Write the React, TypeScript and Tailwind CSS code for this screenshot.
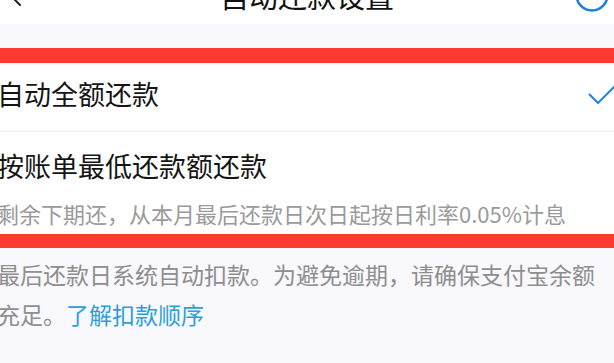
import React from "react";

const font = { fontFamily: '"Noto Sans CJK SC", "Noto Sans", sans-serif' };

function Header() {
    return (
        <div className="relative h-[24px] overflow-hidden bg-white">
            <div className="-mt-[27px] grid h-[44px] grid-cols-[1fr_auto_1fr] items-center">
                <svg width="24" height="24" viewBox="0 0 24 24" className="ml-[4px] text-[#222]">
                    <path d="M16 2 L6 12 L16 22" fill="none" stroke="currentColor" strokeWidth="2" strokeLinecap="round" strokeLinejoin="round" />
                </svg>
                <div className="text-[29px] leading-[44px] text-[#111]">自动还款设置</div>
                <svg width="36" height="36" viewBox="0 0 36 36" className="mr-[4px] justify-self-end">
                    <circle cx="18" cy="18" r="15.5" fill="none" stroke="#1a7fe0" strokeWidth="2.5" />
                </svg>
            </div>
        </div>
    );
}

export default function App() {
    return (
        <div className="h-[363px] w-[614px] overflow-hidden bg-[#f9f8fc]" style={font}>
            <Header />
            <div className="h-[24px]" />
            <div className="h-[15px] bg-[#fe3a30]" />

            <div className="flex h-[68px] items-center justify-between bg-white pb-[8px]">
                <span className="-ml-[3px] text-[27px] leading-[27px] text-[#151515]">自动全额还款</span>
                <svg width="28" height="22" viewBox="0 0 28 22" className="-mr-[2px] mt-[6px]">
                    <path d="M1 9 L10 18 L27 1" fill="none" stroke="#2a86dc" strokeWidth="2.2" />
                </svg>
            </div>
            <div className="h-px bg-[#eeeeee]" />

            <div className="flex h-[102px] flex-col bg-white pt-[20px]">
                <span className="-ml-[3px] text-[27px] leading-[27px] text-[#151515]">按账单最低还款额还款</span>
                <span className="-ml-[3px] mt-[23px] text-[22px] leading-[22px] text-[#9a9a9a]">
                    剩余下期还，从本月最后还款日次日起按日利率0.05%计息
                </span>
            </div>
            <div className="h-[14px] bg-[#fe3a30]" />

            <div className="-ml-[3px] pt-[6px] text-[23px] leading-[40px] text-[#8e8e8e]">
                最后还款日系统自动扣款。为避免逾期，请确保支付宝余额
                <br />
                充足。<span className="text-[#2b9fd9]">了解扣款顺序</span>
            </div>
        </div>
    );
}
